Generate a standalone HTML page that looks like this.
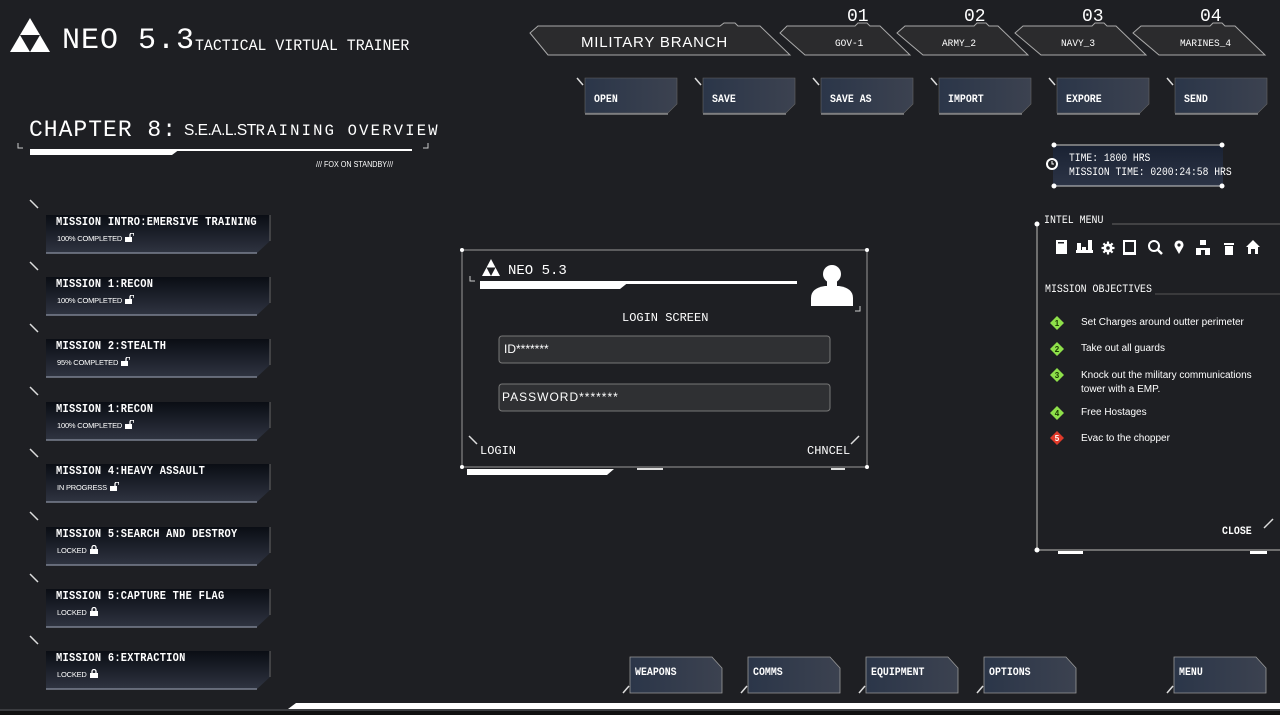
<!DOCTYPE html>
<html><head><meta charset="utf-8"><style>
*{margin:0;padding:0;box-sizing:border-box}
body{width:1280px;height:715px;background:#1e1f23;overflow:hidden;position:relative;color:#fff;font-family:"Liberation Mono","DejaVu Sans Mono",monospace}
.a{position:absolute;white-space:nowrap}
.s{font-family:"Liberation Sans",sans-serif}
.m{position:absolute;left:46px;width:224px;height:38px}
.m .t{position:absolute;white-space:nowrap;left:10px;top:1px;font-size:11.5px;font-weight:bold;letter-spacing:0.3px;transform:scaleX(0.9);transform-origin:left}
.m .u{position:absolute;white-space:nowrap;left:11px;top:18px;font-size:7.5px;font-family:"Liberation Sans",sans-serif;letter-spacing:-0.2px}
.u svg{vertical-align:-1px;margin-left:3px}
.b{position:absolute;width:93px;height:37px}
.b span{position:absolute;left:9px;top:16px;font-size:11px;font-weight:bold;transform:scaleX(0.9);transform-origin:left}
.bb span{top:10px}
</style></head><body>
<svg width="1280" height="715" style="position:absolute;left:0;top:0">
<defs>
<linearGradient id="mg" x1="0" y1="0" x2="0" y2="1"><stop offset="0" stop-color="#0a0d14"/><stop offset="1" stop-color="#2f3441"/></linearGradient>
<linearGradient id="bg" x1="0" y1="0" x2="1" y2="0"><stop offset="0" stop-color="#2b3649"/><stop offset="1" stop-color="#3c4250"/></linearGradient>
<linearGradient id="tg" x1="0" y1="0" x2="0" y2="1"><stop offset="0" stop-color="#1a2233"/><stop offset="1" stop-color="#2c3446"/></linearGradient>
<g id="un"><rect x="0" y="4" width="7" height="5" fill="#fff"/><path d="M5,4 V2 A2,2 0 0 1 9,2 V3" stroke="#fff" stroke-width="1.3" fill="none"/></g>
</defs>
<polygon points="30,18 50,52 10,52" fill="#fff"/><polygon points="20,35 40,35 30,52" fill="#1e1f23"/>
<path d="M18,143 v5 h5 M428,143 v5 h-5" stroke="#ccc" fill="none"/>
<polygon points="30,149 180,149 172,155 30,155" fill="#fff"/><rect x="170" y="149" width="242" height="2" fill="#fff"/>
<g id="cards"></g>
<g fill="#2b2b2d" stroke="#aaa" stroke-width="1">
<path d="M538,26 H720 l4,-3 h11 l3,3 H760 L790,55 H548 L530,33 Z"/>
<path d="M787,26 H855 l3,-3 h9 l3,3 H880 L910,55 H805 L780,33 Z"/>
<path d="M905,26 H974 l3,-3 h9 l3,3 H998 L1028,55 H923 L897,33 Z"/>
<path d="M1023,26 H1092 l3,-3 h9 l3,3 H1116 L1146,55 H1041 L1015,33 Z"/>
<path d="M1141,26 H1210 l3,-3 h9 l3,3 H1235 L1265,55 H1159 L1133,33 Z"/>
</g>
<g id="tb"></g>
<g id="bt"></g>
<rect x="1053" y="146" width="170" height="40" fill="url(#tg)"/>
<line x1="1054" y1="145" x2="1222" y2="145" stroke="#ccc"/><line x1="1054" y1="186" x2="1222" y2="186" stroke="#ccc"/>
<g fill="#fff"><circle cx="1054" cy="145" r="2.5"/><circle cx="1222" cy="145" r="2.5"/><circle cx="1054" cy="186" r="2.5"/><circle cx="1222" cy="186" r="2.5"/></g>
<circle cx="1052" cy="164" r="6" fill="#fff"/><circle cx="1052" cy="164" r="4" fill="#1e1f23"/><path d="M1052,161 v3 h2" stroke="#fff" fill="none"/>
<line x1="1037" y1="224" x2="1037" y2="550" stroke="#888" stroke-width="1.5"/>
<line x1="1037" y1="550" x2="1280" y2="550" stroke="#888" stroke-width="1.5"/>
<circle cx="1037" cy="224" r="2.5" fill="#fff"/><circle cx="1037" cy="550" r="2.5" fill="#fff"/>
<line x1="1112" y1="224" x2="1280" y2="224" stroke="#666"/>
<line x1="1155" y1="294" x2="1280" y2="294" stroke="#555"/>
<rect x="1058" y="551" width="25" height="3" fill="#fff"/><rect x="1250" y="551" width="17" height="3" fill="#fff"/>
<line x1="1264" y1="528" x2="1273" y2="519" stroke="#ddd" stroke-width="1.5"/>
<g fill="#fff">
<rect x="1056" y="240" width="11" height="14"/><rect x="1058" y="242" width="6" height="1.5" fill="#1e1f23"/>
<rect x="1076" y="250" width="17" height="3"/><rect x="1077" y="243" width="4" height="7"/><rect x="1082" y="247" width="4" height="3"/><rect x="1088" y="240" width="4" height="10"/>
<circle cx="1108" cy="248" r="4.5"/>
<g stroke="#fff" stroke-width="2.2"><line x1="1108" y1="241.5" x2="1108" y2="254.5"/><line x1="1101.5" y1="248" x2="1114.5" y2="248"/><line x1="1103.4" y1="243.4" x2="1112.6" y2="252.6"/><line x1="1112.6" y1="243.4" x2="1103.4" y2="252.6"/></g>
<circle cx="1108" cy="248" r="1.8" fill="#1e1f23"/>
<rect x="1123" y="240" width="13" height="15"/><rect x="1125" y="242" width="9" height="10" fill="#1e1f23"/>
<circle cx="1154" cy="246" r="5" fill="none" stroke="#fff" stroke-width="2"/><line x1="1158" y1="250" x2="1162" y2="254" stroke="#fff" stroke-width="2.5"/>
<path d="M1179,254 L1175,247 A4.5,4.5 0 1 1 1183,247 Z"/><circle cx="1179" cy="245" r="1.6" fill="#1e1f23"/>
<rect x="1200" y="240" width="6" height="5"/><rect x="1196" y="248" width="14" height="2"/><rect x="1196" y="250" width="5" height="5"/><rect x="1205" y="250" width="5" height="5"/>
<rect x="1224" y="243" width="10" height="2"/><rect x="1225" y="246" width="8" height="9"/>
<path d="M1246,247 L1253,240 L1260,247 H1258 V254 H1248 V247 Z"/><rect x="1251" y="249" width="4" height="5" fill="#1e1f23"/>
</g>
<g font-family="Liberation Sans" font-size="8" font-weight="bold" text-anchor="middle">
<polygon points="1057,316 1064,323 1057,330 1050,323" fill="#8ee04a"/><text x="1057" y="326" fill="#1a3a00">1</text>
<polygon points="1057,342 1064,349 1057,356 1050,349" fill="#8ee04a"/><text x="1057" y="352" fill="#1a3a00">2</text>
<polygon points="1057,368 1064,375 1057,382 1050,375" fill="#8ee04a"/><text x="1057" y="378" fill="#1a3a00">3</text>
<polygon points="1057,406 1064,413 1057,420 1050,413" fill="#8ee04a"/><text x="1057" y="416" fill="#1a3a00">4</text>
<polygon points="1057,431 1064,438 1057,445 1050,438" fill="#e03a2a"/><text x="1057" y="441" fill="#fff">5</text>
</g>
<rect x="462" y="250" width="405" height="217" fill="none" stroke="#999"/>
<g fill="#fff"><circle cx="462" cy="250" r="2"/><circle cx="867" cy="250" r="2"/><circle cx="462" cy="467" r="2"/><circle cx="867" cy="467" r="2"/></g>
<polygon points="491,259 500,276 482,276" fill="#fff"/><polygon points="486.5,267.5 495.5,267.5 491,276" fill="#1e1f23"/>
<path d="M470,276 v5 h5 M860,306 v5 h-5" stroke="#ccc" fill="none"/>
<polygon points="480,281 630,281 620,289 480,289" fill="#fff"/><rect x="620" y="281" width="177" height="3" fill="#fff"/>
<circle cx="832" cy="274" r="9" fill="#fff"/><path d="M811,306 v-8 q0,-10 14,-12 h14 q14,2 14,12 v8 Z" fill="#fff"/><rect x="827" y="279" width="10" height="8" fill="#fff"/>
<rect x="499" y="336" width="331" height="27" rx="3" fill="#2f3033" stroke="#777"/>
<rect x="499" y="384" width="331" height="27" rx="3" fill="#2f3033" stroke="#777"/>
<line x1="469" y1="436" x2="477" y2="444" stroke="#ddd" stroke-width="1.5"/><line x1="851" y1="444" x2="859" y2="436" stroke="#ddd" stroke-width="1.5"/>
<polygon points="467,469 614,469 607,475 467,475" fill="#fff"/><rect x="637" y="468" width="26" height="2" fill="#ddd"/><rect x="831" y="468" width="14" height="2" fill="#ddd"/>
<polygon points="296,703 1280,703 1280,709 288,709" fill="#fff"/>
<rect x="0" y="709" width="1280" height="2" fill="#3a3b3f"/>
<rect x="0" y="711" width="1280" height="4" fill="#111"/>
</svg>
<script>
var s='',ys=[215,277,339,402,464,527,589,651];
ys.forEach(function(y){s+='<line x1="30" y1="'+(y-15)+'" x2="38" y2="'+(y-7)+'" stroke="#ddd" stroke-width="1.5"/><path d="M46,'+y+' H270 V'+(y+26)+' L257,'+(y+38)+' H46 Z" fill="url(#mg)"/><line x1="46" y1="'+(y+38)+'" x2="257" y2="'+(y+38)+'" stroke="#7a8090" stroke-width="1.5"/><line x1="270" y1="'+y+'" x2="270" y2="'+(y+26)+'" stroke="#666"/>';});
document.getElementById('cards').innerHTML=s;
var t='';[585,703,821,939,1057,1175].forEach(function(x){var r=x+92;t+='<line x1="'+(x-8)+'" y1="78" x2="'+(x-2)+'" y2="85" stroke="#ddd" stroke-width="1.5"/><path d="M'+x+',78 H'+r+' V104 L'+(r-9)+',113 H'+x+' Z" fill="url(#bg)" stroke="#666" stroke-width="0.6"/><line x1="'+x+'" y1="114" x2="'+(r-9)+'" y2="114" stroke="#bbb"/>';});
document.getElementById('tb').innerHTML=t;
var b='';[630,748,866,984,1174].forEach(function(x){var r=x+92;b+='<line x1="'+(x-7)+'" y1="693" x2="'+(x-1)+'" y2="686" stroke="#ddd" stroke-width="1.5"/><path d="M'+x+',657 H'+(r-10)+' L'+r+',668 V693 H'+x+' Z" fill="url(#bg)" stroke="#999" stroke-width="0.8"/>';});
document.getElementById('bt').innerHTML=b;
</script>
<div class="a" style="left:62px;top:24px;font-size:30px;letter-spacing:1px">NEO 5.3</div>
<div class="a" style="left:195px;top:37px;font-size:16px;transform:scaleX(0.93);transform-origin:left">TACTICAL VIRTUAL TRAINER</div>
<div class="a" style="left:29px;top:117px;font-size:23px;letter-spacing:1px">CHAPTER 8:</div>
<div class="a" style="left:184px;top:122px;font-size:15.5px;letter-spacing:2.2px"><span class="s" style="letter-spacing:-0.5px">S.E.A.L.ST</span>RAINING OVERVIEW</div>
<div class="a s" style="left:316px;top:160px;font-size:8px;transform:scaleX(0.9);transform-origin:left">/// FOX ON STANDBY///</div>

<div class="m" style="top:215px"><div class="t">MISSION INTRO:EMERSIVE TRAINING</div><div class="u">100% COMPLETED<svg width="9" height="9"><use href="#un"/></svg></div></div>
<div class="m" style="top:277px"><div class="t">MISSION 1:RECON</div><div class="u">100% COMPLETED<svg width="9" height="9"><use href="#un"/></svg></div></div>
<div class="m" style="top:339px"><div class="t">MISSION 2:STEALTH</div><div class="u">95% COMPLETED<svg width="9" height="9"><use href="#un"/></svg></div></div>
<div class="m" style="top:402px"><div class="t">MISSION 1:RECON</div><div class="u">100% COMPLETED<svg width="9" height="9"><use href="#un"/></svg></div></div>
<div class="m" style="top:464px"><div class="t">MISSION 4:HEAVY ASSAULT</div><div class="u">IN PROGRESS<svg width="9" height="9"><use href="#un"/></svg></div></div>
<div class="m" style="top:527px"><div class="t">MISSION 5:SEARCH AND DESTROY</div><div class="u">LOCKED<svg width="8" height="9"><rect x="0" y="4" width="8" height="5" fill="#fff"/><path d="M2,4 V2.5 A2,2 0 0 1 6,2.5 V4" stroke="#fff" stroke-width="1.3" fill="none"/></svg></div></div>
<div class="m" style="top:589px"><div class="t">MISSION 5:CAPTURE THE FLAG</div><div class="u">LOCKED<svg width="8" height="9"><rect x="0" y="4" width="8" height="5" fill="#fff"/><path d="M2,4 V2.5 A2,2 0 0 1 6,2.5 V4" stroke="#fff" stroke-width="1.3" fill="none"/></svg></div></div>
<div class="m" style="top:651px"><div class="t">MISSION 6:EXTRACTION</div><div class="u">LOCKED<svg width="8" height="9"><rect x="0" y="4" width="8" height="5" fill="#fff"/><path d="M2,4 V2.5 A2,2 0 0 1 6,2.5 V4" stroke="#fff" stroke-width="1.3" fill="none"/></svg></div></div>

<div class="a s" style="left:581px;top:34px;font-size:15px;letter-spacing:0.8px">MILITARY BRANCH</div>
<div class="a" style="left:847px;top:7px;font-size:18px">01</div>
<div class="a" style="left:964px;top:7px;font-size:18px">02</div>
<div class="a" style="left:1082px;top:7px;font-size:18px">03</div>
<div class="a" style="left:1200px;top:7px;font-size:18px">04</div>
<div class="a" style="left:835px;top:38px;font-size:10.5px;transform:scaleX(0.9);transform-origin:left">GOV-1</div>
<div class="a" style="left:942px;top:38px;font-size:10.5px;transform:scaleX(0.9);transform-origin:left">ARMY_2</div>
<div class="a" style="left:1061px;top:38px;font-size:10.5px;transform:scaleX(0.9);transform-origin:left">NAVY_3</div>
<div class="a" style="left:1180px;top:38px;font-size:10.5px;transform:scaleX(0.9);transform-origin:left">MARINES_4</div>

<div class="b" style="left:585px;top:78px"><span>OPEN</span></div>
<div class="b" style="left:703px;top:78px"><span>SAVE</span></div>
<div class="b" style="left:821px;top:78px"><span>SAVE AS</span></div>
<div class="b" style="left:939px;top:78px"><span>IMPORT</span></div>
<div class="b" style="left:1057px;top:78px"><span>EXPORE</span></div>
<div class="b" style="left:1175px;top:78px"><span>SEND</span></div>

<div class="a" style="left:1069px;top:152px;font-size:11px;line-height:14px;transform:scaleX(0.88);transform-origin:left">TIME: 1800 HRS<br>MISSION TIME: 0200:24:58 HRS</div>

<div class="a" style="left:1044px;top:215px;font-size:11px;transform:scaleX(0.9);transform-origin:left">INTEL MENU</div>
<div class="a" style="left:1045px;top:284px;font-size:11px;transform:scaleX(0.9);transform-origin:left">MISSION OBJECTIVES</div>
<div class="a s" style="left:1081px;top:317px;font-size:10px">Set Charges around outter perimeter</div>
<div class="a s" style="left:1081px;top:343px;font-size:10px">Take out all guards</div>
<div class="a s" style="left:1081px;top:369px;font-size:10px;line-height:13.5px">Knock out the military communications<br>tower with a EMP.</div>
<div class="a s" style="left:1081px;top:407px;font-size:10px">Free Hostages</div>
<div class="a s" style="left:1081px;top:433px;font-size:10px">Evac to the chopper</div>
<div class="a" style="left:1222px;top:526px;font-size:11px;font-weight:bold;transform:scaleX(0.9);transform-origin:left">CLOSE</div>

<div class="a" style="left:508px;top:263px;font-size:14px">NEO 5.3</div>
<div class="a" style="left:622px;top:311px;font-size:12px">LOGIN SCREEN</div>
<div class="a s" style="left:504px;top:342px;font-size:12px">ID*******</div>
<div class="a s" style="left:502px;top:390px;font-size:12px;letter-spacing:1px">PASSWORD*******</div>
<div class="a" style="left:480px;top:444px;font-size:12px">LOGIN</div>
<div class="a" style="left:807px;top:444px;font-size:12px">CHNCEL</div>

<div class="b bb" style="left:630px;top:657px"><span style="left:5px">WEAPONS</span></div>
<div class="b bb" style="left:748px;top:657px"><span style="left:5px">COMMS</span></div>
<div class="b bb" style="left:866px;top:657px"><span style="left:5px">EQUIPMENT</span></div>
<div class="b bb" style="left:984px;top:657px"><span style="left:5px">OPTIONS</span></div>
<div class="b bb" style="left:1174px;top:657px"><span style="left:5px">MENU</span></div>
</body></html>
